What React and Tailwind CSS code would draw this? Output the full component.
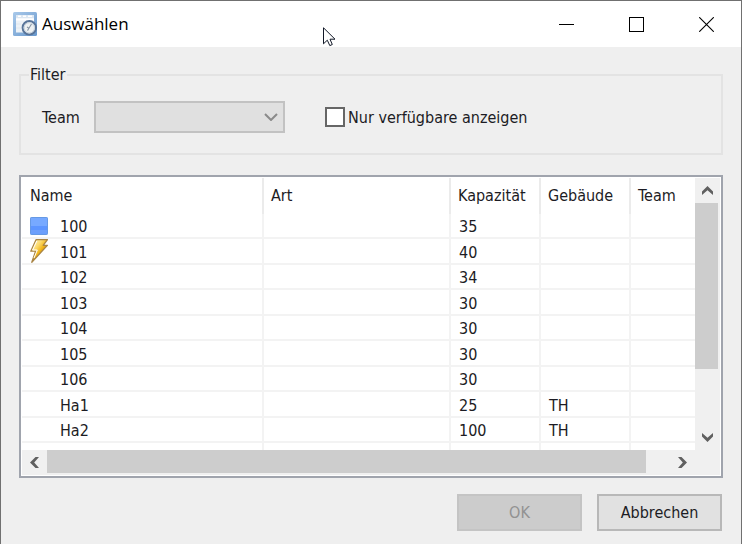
const rooms = [
  { name: "100", capacity: "35", building: "", icon: "square" },
  { name: "101", capacity: "40", building: "", icon: "bolt" },
  { name: "102", capacity: "34", building: "" },
  { name: "103", capacity: "30", building: "" },
  { name: "104", capacity: "30", building: "" },
  { name: "105", capacity: "30", building: "" },
  { name: "106", capacity: "30", building: "" },
  { name: "Ha1", capacity: "25", building: "TH" },
  { name: "Ha2", capacity: "100", building: "TH" },
  { name: "", capacity: "", building: "" },
];

const columns = ["Name", "Art", "Kapazität", "Gebäude", "Team"];

function AppIcon() {
  return (
    <svg className="h-6 w-6 shrink-0" viewBox="0 0 24 24" aria-hidden="true">
      <defs>
        <linearGradient id="app-bg" x1="0" y1="0" x2="1" y2="1">
          <stop offset="0" stopColor="#a9c9ea" />
          <stop offset="1" stopColor="#6797cc" />
        </linearGradient>
      </defs>
      <rect width="24" height="24" rx="1.5" fill="url(#app-bg)" />
      <path d="M3 3h18v17.5H3z" fill="#edf2f7" />
      <path d="M3 3h18v3H3z" fill="#dce7f2" />
      <path d="M5 4.3h3M10 4.3h3M15 4.3h4" stroke="#fff" strokeWidth="1.4" />
      <path d="M3 7.5h18" stroke="#fff" strokeWidth="2" />
      <path d="M3 12h5M3 16h5" stroke="#e0e7ee" strokeWidth="1" />
      <circle cx="16.3" cy="15.8" r="6.7" fill="#eef1f2" stroke="#587499" strokeWidth="2" />
      <circle cx="16.3" cy="15.8" r="5.2" fill="none" stroke="#c3cfdb" strokeWidth="1" />
      <path d="M18.5 12l-2.6 4.2-1.4 2.4M14 15l2 1.2" fill="none" stroke="#8795a5" strokeWidth="1.1" />
    </svg>
  );
}

function BoltIcon() {
  return (
    <svg className="h-6 w-[18px]" viewBox="0 0 18 24" aria-hidden="true">
      <defs>
        <linearGradient id="bolt" x1="0" y1="0" x2="1" y2="1">
          <stop offset="0" stopColor="#fffbe0" />
          <stop offset="0.35" stopColor="#fbd968" />
          <stop offset="0.55" stopColor="#f0b010" />
          <stop offset="1" stopColor="#e0a010" />
        </linearGradient>
      </defs>
      <path d="M6 0.7H17.5L13.2 6.3H17.4L1.8 23.3L5.6 12.2H0.8Z" fill="url(#bolt)" stroke="#a98545" strokeWidth="1.3" strokeLinejoin="round" />
      <path d="M6.8 2L2.6 11H7.3L4 19" fill="none" stroke="#fff" strokeWidth="1" />
    </svg>
  );
}

function SquareIcon() {
  return (
    <svg className="h-[18px] w-[18px]" viewBox="0 0 18 18" aria-hidden="true">
      <rect x="0.5" y="0.5" width="17" height="17" rx="0.7" fill="#77a9ff" stroke="#6699e4" />
      <path d="M1 9h16v7.5H1z" fill="#5d95ff" />
      <path d="M1 13h16v3.5H1z" fill="#6d9ffb" />
    </svg>
  );
}

const arrowPaths = {
  up: "M0 9V5.5L5.5 0L11 5.5V9L5.5 4.2Z",
  down: "M0 0V3.5L5.5 9L11 3.5V0L5.5 4.8Z",
  left: "M9 0H5.5L0 5.5L5.5 11H9L4.2 5.5Z",
  right: "M0 0H3.5L9 5.5L3.5 11H0L4.8 5.5Z",
};

function ScrollButton({ direction, label }) {
  const vertical = direction === "up" || direction === "down";
  return (
    <button type="button" aria-label={label} className="flex h-[25px] w-[25px] shrink-0 items-center justify-center">
      <svg
        className={vertical ? "h-[9px] w-[11px]" : "h-[11px] w-[9px]"}
        viewBox={vertical ? "0 0 11 9" : "0 0 9 11"}
        aria-hidden="true"
      >
        <path d={arrowPaths[direction]} fill="#606060" />
      </svg>
    </button>
  );
}

function TitleBar() {
  const control = "flex w-[70px] items-center justify-center";
  return (
    <header className="flex h-[46px] items-stretch bg-white">
      <div className="flex flex-1 items-center gap-[5px] pl-3">
        <AppIcon />
        <h1 className="font-['Open_Sans','Noto_Sans',sans-serif] text-[17px] leading-6 text-black">Auswählen</h1>
      </div>
      <button type="button" aria-label="Minimieren" className={control}>
        <svg className="h-[15px] w-[15px]" viewBox="0 0 15 15" shapeRendering="crispEdges">
          <path d="M0 7.5h15" stroke="#000" />
        </svg>
      </button>
      <button type="button" aria-label="Maximieren" className={control}>
        <svg className="h-[15px] w-[15px]" viewBox="0 0 15 15" shapeRendering="crispEdges">
          <path d="M.5 .5h14v14H.5z" fill="none" stroke="#000" />
        </svg>
      </button>
      <button type="button" aria-label="Schließen" className={control}>
        <svg className="h-[15px] w-[15px]" viewBox="0 0 15 15">
          <path d="M.2 .2l14.6 14.6M14.8 .2L.2 14.8" stroke="#000" strokeWidth="1.1" />
        </svg>
      </button>
    </header>
  );
}

function FilterGroup() {
  return (
    <fieldset className="border-2 border-[#e3e3e3] pb-5 pl-[21px]">
      <legend className="-ml-[13px] px-px leading-6">Filter</legend>
      <div className="mt-[14px] flex h-8 items-center">
        <label htmlFor="team" className="w-[52px] pt-[2px]">Team</label>
        <div className="relative h-8 w-[191px]">
          <select id="team" disabled className="h-full w-full appearance-none border-2 border-[#c2c2c2] bg-[#e0e0e0] px-2">
            <option></option>
          </select>
          <svg className="pointer-events-none absolute right-[7px] top-3 h-2 w-[14px]" viewBox="0 0 14 8" aria-hidden="true">
            <path d="M1 1l6 6 6-6" fill="none" stroke="#8a8a8a" strokeWidth="2" />
          </svg>
        </div>
        <label className="ml-10 flex items-center gap-[3px]">
          <input type="checkbox" className="h-5 w-5 appearance-none border-2 border-[#666] bg-white" />
          <span className="pt-[2px]">Nur verfügbare anzeigen</span>
        </label>
      </div>
    </fieldset>
  );
}

function RoomTable() {
  const cell = "border-b-2 border-r-2 border-[#f3f3f3] p-0 pt-[3px] pl-2 leading-5";
  return (
    <table className="w-full table-fixed border-separate border-spacing-0">
      <colgroup>
        <col className="w-[242px]" />
        <col className="w-[187px]" />
        <col className="w-[90px]" />
        <col className="w-[90px]" />
        <col />
      </colgroup>
      <thead>
        <tr className="h-9">
          {columns.map((c) => (
            <th key={c} scope="col" className="border-r-2 border-[#ebebeb] pl-[7px] text-left font-normal leading-5 first:pl-2 last:border-r-0">
              {c}
            </th>
          ))}
        </tr>
      </thead>
      <tbody>
        {rooms.map((r, i) => (
          <tr key={i} className="odd:h-[25px] even:h-[26px]">
            <td className={cell}>
              <div className="flex h-5 items-center gap-3">
                <span className="flex w-[18px] shrink-0 items-center pb-[3px]">
                  {r.icon === "square" && <SquareIcon />}
                  {r.icon === "bolt" && <BoltIcon />}
                </span>
                {r.name}
              </div>
            </td>
            <td className={cell}></td>
            <td className={cell}>{r.capacity}</td>
            <td className={cell}>{r.building}</td>
            <td className="border-b-2 border-[#f3f3f3]"></td>
          </tr>
        ))}
      </tbody>
    </table>
  );
}

function RoomList() {
  return (
    <section className="border-2 border-[#a0a4ad] bg-white p-px">
      <div className="flex">
        <div className="h-[272px] min-w-0 flex-1 overflow-hidden">
          <RoomTable />
        </div>
        <div className="flex w-[25px] flex-col items-start bg-[#f0f0f0]">
          <ScrollButton direction="up" label="Nach oben" />
          <div className="w-[23px] flex-[166] bg-[#cdcdcd]"></div>
          <div className="flex-[56]"></div>
          <ScrollButton direction="down" label="Nach unten" />
        </div>
      </div>
      <div className="flex h-[25px] bg-[#f0f0f0] pr-[25px]">
        <ScrollButton direction="left" label="Nach links" />
        <div className="h-[23px] flex-[599] bg-[#cdcdcd]"></div>
        <div className="flex-[24]"></div>
        <ScrollButton direction="right" label="Nach rechts" />
      </div>
    </section>
  );
}

export default function App() {
  return (
    <div className="relative min-h-screen border-x border-t border-[#707070] bg-[#efefef] font-['DejaVu_Sans_Condensed','Noto_Sans',sans-serif] text-[16px] text-[#1c1c24]">
      <TitleBar />
      <main className="px-[18px] pt-4">
        <FilterGroup />
        <div className="mt-5">
          <RoomList />
        </div>
        <footer className="mt-4 flex justify-end gap-[15px] pr-px">
          <button type="button" disabled className="h-[37px] w-[125px] border-2 border-[#c4c4c4] bg-[#cccccc] text-[#929292]">
            OK
          </button>
          <button type="button" className="h-[37px] w-[125px] border-2 border-[#b8b8b8] bg-[#e1e1e1]">
            Abbrechen
          </button>
        </footer>
      </main>
      <svg className="pointer-events-none absolute left-[322px] top-[26px] h-5 w-[13px]" viewBox="0 0 13 20" aria-hidden="true">
        <path d="M.5 .8V16.8L4.3 13.2L6.8 18.6L9.3 17.5L7 12.2H12Z" fill="#fff" stroke="#111827" strokeWidth="1" />
      </svg>
    </div>
  );
}
